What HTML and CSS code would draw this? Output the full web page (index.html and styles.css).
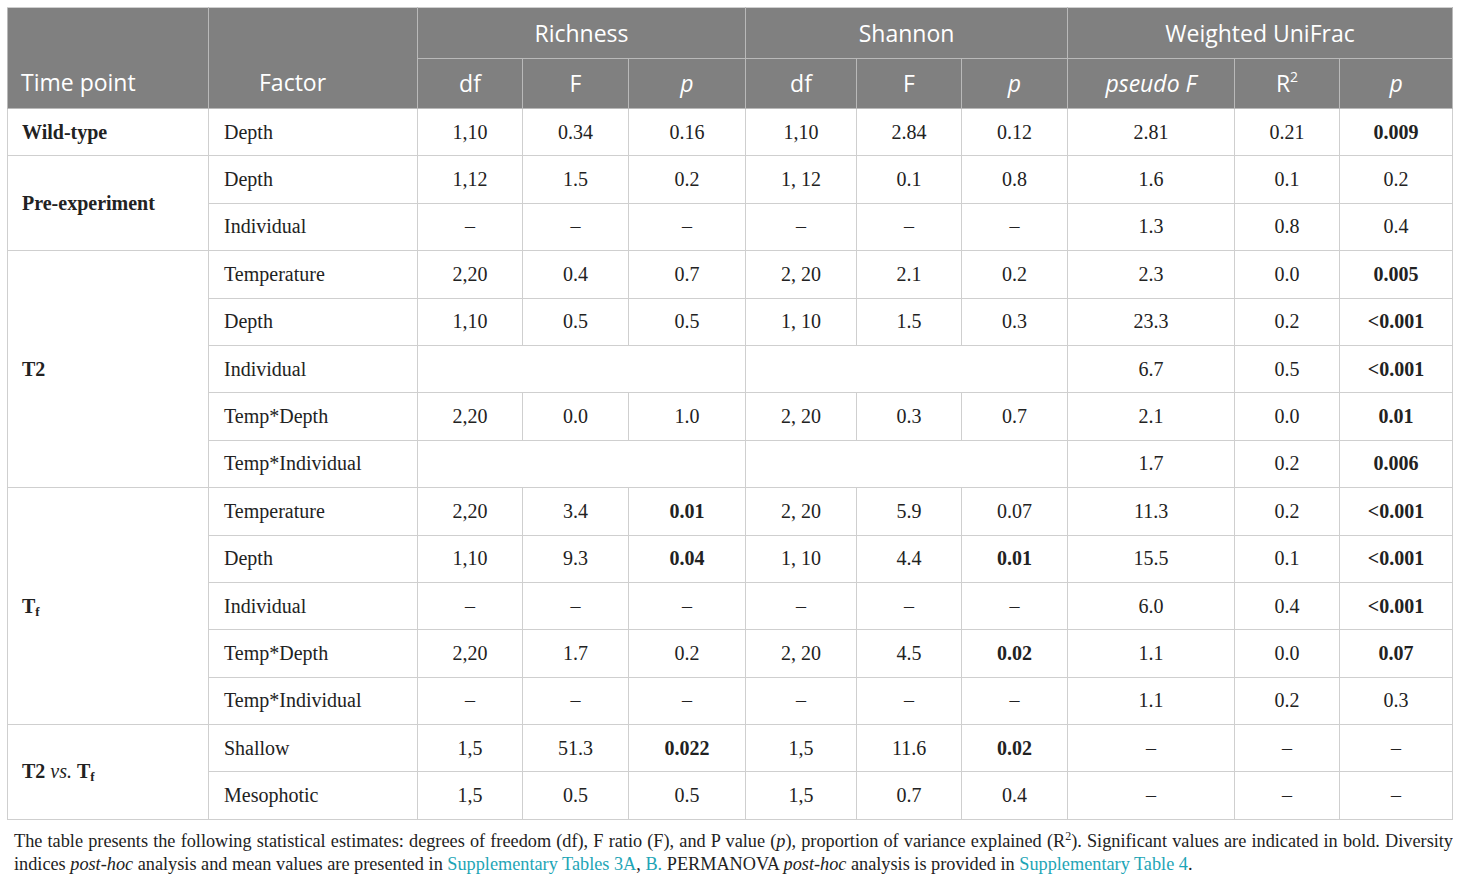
FILE: index.html
```html
<!DOCTYPE html>
<html lang="en">
<head>
  <meta charset="UTF-8">
  <meta name="viewport" content="width=device-width, initial-scale=1.0">
  <title>PERMANOVA table</title>
  <link rel="stylesheet" href="styles.css">
</head>
<body>
  <table class="stats">
    <colgroup>
      <col style="width:201px"><col style="width:209px">
      <col style="width:105px"><col style="width:106px"><col style="width:117px">
      <col style="width:111px"><col style="width:105px"><col style="width:106px">
      <col style="width:167px"><col style="width:105px"><col style="width:113px">
    </colgroup>
    <thead>
      <tr class="head-top">
        <th rowspan="2" class="time-head">Time point</th>
        <th rowspan="2" class="factor-head">Factor</th>
        <th colspan="3">Richness</th>
        <th colspan="3">Shannon</th>
        <th colspan="3">Weighted UniFrac</th>
      </tr>
      <tr class="head-sub">
        <th>df</th><th>F</th><th><i>p</i></th>
        <th>df</th><th>F</th><th><i>p</i></th>
        <th><i>pseudo F</i></th><th>R<sup>2</sup></th><th><i>p</i></th>
      </tr>
    </thead>
    <tbody>
      <tr>
        <td class="time"><b>Wild-type</b></td><td class="factor">Depth</td>
        <td>1,10</td><td>0.34</td><td>0.16</td>
        <td>1,10</td><td>2.84</td><td>0.12</td>
        <td>2.81</td><td>0.21</td><td><b>0.009</b></td>
      </tr>
      <tr>
        <td class="time" rowspan="2"><b>Pre-experiment</b></td><td class="factor">Depth</td>
        <td>1,12</td><td>1.5</td><td>0.2</td>
        <td>1, 12</td><td>0.1</td><td>0.8</td>
        <td>1.6</td><td>0.1</td><td>0.2</td>
      </tr>
      <tr>
        <td class="factor">Individual</td>
        <td>–</td><td>–</td><td>–</td>
        <td>–</td><td>–</td><td>–</td>
        <td>1.3</td><td>0.8</td><td>0.4</td>
      </tr>
      <tr>
        <td class="time" rowspan="5"><b>T2</b></td><td class="factor">Temperature</td>
        <td>2,20</td><td>0.4</td><td>0.7</td>
        <td>2, 20</td><td>2.1</td><td>0.2</td>
        <td>2.3</td><td>0.0</td><td><b>0.005</b></td>
      </tr>
      <tr>
        <td class="factor">Depth</td>
        <td>1,10</td><td>0.5</td><td>0.5</td>
        <td>1, 10</td><td>1.5</td><td>0.3</td>
        <td>23.3</td><td>0.2</td><td><b>&lt;0.001</b></td>
      </tr>
      <tr>
        <td class="factor">Individual</td>
        <td colspan="3"></td>
        <td colspan="3"></td>
        <td>6.7</td><td>0.5</td><td><b>&lt;0.001</b></td>
      </tr>
      <tr>
        <td class="factor">Temp*Depth</td>
        <td>2,20</td><td>0.0</td><td>1.0</td>
        <td>2, 20</td><td>0.3</td><td>0.7</td>
        <td>2.1</td><td>0.0</td><td><b>0.01</b></td>
      </tr>
      <tr>
        <td class="factor">Temp*Individual</td>
        <td colspan="3"></td>
        <td colspan="3"></td>
        <td>1.7</td><td>0.2</td><td><b>0.006</b></td>
      </tr>
      <tr>
        <td class="time" rowspan="5"><b>T<sub>f</sub></b></td><td class="factor">Temperature</td>
        <td>2,20</td><td>3.4</td><td><b>0.01</b></td>
        <td>2, 20</td><td>5.9</td><td>0.07</td>
        <td>11.3</td><td>0.2</td><td><b>&lt;0.001</b></td>
      </tr>
      <tr>
        <td class="factor">Depth</td>
        <td>1,10</td><td>9.3</td><td><b>0.04</b></td>
        <td>1, 10</td><td>4.4</td><td><b>0.01</b></td>
        <td>15.5</td><td>0.1</td><td><b>&lt;0.001</b></td>
      </tr>
      <tr>
        <td class="factor">Individual</td>
        <td>–</td><td>–</td><td>–</td>
        <td>–</td><td>–</td><td>–</td>
        <td>6.0</td><td>0.4</td><td><b>&lt;0.001</b></td>
      </tr>
      <tr>
        <td class="factor">Temp*Depth</td>
        <td>2,20</td><td>1.7</td><td>0.2</td>
        <td>2, 20</td><td>4.5</td><td><b>0.02</b></td>
        <td>1.1</td><td>0.0</td><td><b>0.07</b></td>
      </tr>
      <tr>
        <td class="factor">Temp*Individual</td>
        <td>–</td><td>–</td><td>–</td>
        <td>–</td><td>–</td><td>–</td>
        <td>1.1</td><td>0.2</td><td>0.3</td>
      </tr>
      <tr>
        <td class="time" rowspan="2"><b>T2</b> <i>vs.</i> <b>T<sub>f</sub></b></td><td class="factor">Shallow</td>
        <td>1,5</td><td>51.3</td><td><b>0.022</b></td>
        <td>1,5</td><td>11.6</td><td><b>0.02</b></td>
        <td>–</td><td>–</td><td>–</td>
      </tr>
      <tr>
        <td class="factor">Mesophotic</td>
        <td>1,5</td><td>0.5</td><td>0.5</td>
        <td>1,5</td><td>0.7</td><td>0.4</td>
        <td>–</td><td>–</td><td>–</td>
      </tr>
    </tbody>
  </table>
  <p class="caption">The table presents the following statistical estimates: degrees of freedom (df), F ratio (F), and P value (<i>p</i>), proportion of variance explained (R<sup>2</sup>). Significant values are indicated in bold. Diversity indices <i>post-hoc</i> analysis and mean values are presented in <a href="#">Supplementary Tables 3A</a>, <a href="#">B.</a> PERMANOVA <i>post-hoc</i> analysis is provided in <a href="#">Supplementary Table 4</a>.</p>
</body>
</html>
```

FILE: styles.css
```css
body {
  margin: 7px;
  background: #fff;
  color: #222;
  font-family: "Liberation Serif", "Times New Roman", serif;
}

.stats {
  width: 1446px;
  border-collapse: collapse;
  table-layout: fixed;
  border: 1.5px solid #cfcfcf;
}

.stats th {
  background: #808080;
  color: #fff;
  font-family: "Open Sans", "Noto Sans", sans-serif;
  font-weight: normal;
  font-size: 23px;
  border: 1.5px solid #b9b9b9;
  padding: 0;
  text-align: center;
}
.stats thead tr:first-child th {
  border-top-color: #cfcfcf;
}
.head-top {
  height: 51px;
}
.head-sub {
  height: 50px;
}
.head-top th {
  padding-bottom: 1px;
}
.stats th.time-head {
  text-align: left;
  vertical-align: bottom;
  padding: 0 0 10px 13px;
}
.stats th.factor-head {
  text-align: left;
  vertical-align: bottom;
  padding: 0 0 10px 50px;
}
.head-sub th {
  padding-bottom: 1px;
}
.stats th sup {
  font-size: 14px;
  vertical-align: 10px;
  line-height: 0;
}

.stats td {
  border: 1.5px solid #cfcfcf;
  font-size: 20px;
  text-align: center;
  vertical-align: middle;
  padding: 0;
  height: 46.4px;
}
.stats td b {
  font-weight: bold;
}
.stats td.time {
  text-align: left;
  padding-left: 14px;
}
.stats td.factor {
  text-align: left;
  padding-left: 15px;
}
.stats td sub {
  font-size: 13px;
  vertical-align: -3px;
  line-height: 0;
}

.caption {
  margin: 10px 0 0 7px;
  font-size: 18.25px;
  line-height: 23px;
  text-align: justify;
  color: #222;
}
.caption a {
  color: #1ea5b6;
  text-decoration: none;
}
.caption sup {
  font-size: 12px;
  vertical-align: 7px;
  line-height: 0;
}
```
